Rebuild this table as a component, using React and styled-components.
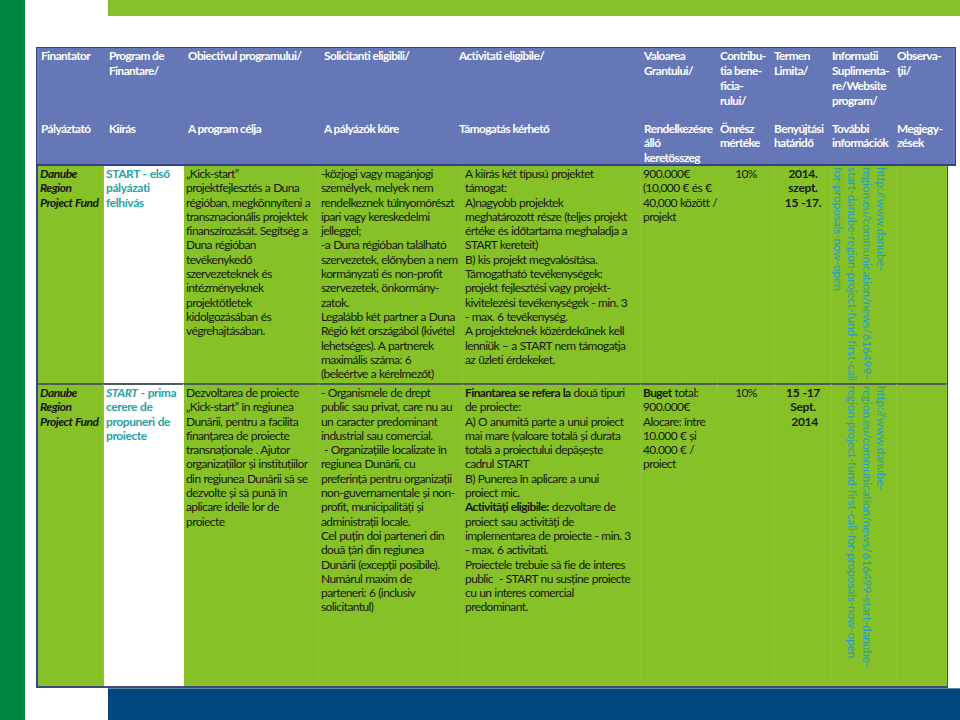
import React from 'react';
import styled, { createGlobalStyle } from 'styled-components';

const Global = createGlobalStyle`
  html, body { margin: 0; padding: 0; background: #fff; }
  body { font-family: Lato, "Open Sans", "Liberation Sans", sans-serif; }
`;

const Page = styled.div`
  display: flex;
  width: 960px;
  height: 720px;
  overflow: hidden;
  background: #fff;
`;

const SideBar = styled.div`
  flex: none;
  width: 25px;
  background: #00873f;
`;

const Main = styled.div`
  flex: 1;
  min-width: 0;
  display: flex;
  flex-direction: column;
`;

const TopBand = styled.div`
  flex: none;
  height: 16px;
  margin-left: 83px;
  background: #86c12a;
`;

const Content = styled.div`
  flex: none;
  display: flex;
  flex-direction: column;
  padding: 31px 0 0 11px;
`;

const FooterBand = styled.div`
  flex: 1;
  margin-left: 83px;
  background: #00467f;
  border-top: 1px solid #5f86b0;
`;

const HeadGrid = styled.div`
  display: grid;
  grid-template-columns: 68px 79px 136px 135px 185px 76px 54px 58px 65px 62px;
  grid-template-rows: 74px 42px;
  width: 920px;
  box-sizing: border-box;
  background: #6677b7;
  border: 1px solid #33408a;
  border-bottom-width: 2px;
`;

const HeadCell = styled.div`
  padding: 0 2px 0 4px;
  color: #fff;
  font-weight: 700;
  font-size: 11.8px;
  line-height: ${(p) => (p.$tight ? '14.4px' : '15px')};
  white-space: nowrap;
  letter-spacing: -0.55px;
`;

const BodyGrid = styled.div`
  position: relative;
  z-index: 1;
  display: grid;
  grid-template-columns: 66px 80px 135px 144px 178px 77px 57px 57px 65px 50px;
  grid-template-rows: 217px 303px;
  width: 912px;
  box-sizing: border-box;
  border-left: 2px solid #3a4585;
  border-right: 1px solid #3f4d6a;
  border-bottom: 2px solid #3f4a74;
`;

const Cell = styled.div`
  box-sizing: border-box;
  padding: 1px 2px 0 2px;
  background: ${(p) => (p.$white ? '#ffffff' : '#86c128')};
  border-right: 1px solid ${(p) => (p.$white ? 'transparent' : 'rgba(255,255,255,0.07)')};
  border-top: ${(p) => (p.$second ? '2px solid #4f5a5c' : '0')};
  color: #16180e;
  font-size: 12px;
  line-height: 14.3px;
  white-space: nowrap;
  text-align: ${(p) => p.$align || 'left'};
  letter-spacing: -0.6px;
  word-spacing: 0.5px;
`;

const FunderCell = styled(Cell)`
  font-weight: 700;
  font-style: italic;
  color: #141414;
  letter-spacing: -0.5px;
`;

const CallCell = styled(Cell)`
  font-weight: 700;
  color: #2aa0a7;
  letter-spacing: -0.4px;
`;

const DateCell = styled(Cell)`
  font-weight: 700;
  letter-spacing: -0.3px;
`;

const LinkCell = styled(Cell)`
  writing-mode: vertical-rl;
  padding: 1px 8px 0 0;
  color: #239ec0;
  line-height: 14.3px;
  letter-spacing: -0.2px;
  overflow: visible;
`;

const Strong = styled.b`
  font-weight: 700;
`;

const Em = styled.i`
  font-style: italic;
`;

const Lines = ({ items }) =>
  items.map((l, i) => (
    <React.Fragment key={i}>
      {l}
      {i < items.length - 1 && <br />}
    </React.Fragment>
  ));

const head1 = [
  ['Finantator'],
  ['Program de', 'Finantare/'],
  ['Obiectivul programului/'],
  ['Solicitanti eligibili/'],
  ['Activitati eligibile/'],
  ['Valoarea', 'Grantului/'],
  ['Contribu-', 'tia bene-', 'ficia-', 'rului/'],
  ['Termen', 'Limita/'],
  ['Informatii', 'Suplimenta-', 're/Website', 'program/'],
  ['Observa-', 'ţii/'],
];

const head2 = [
  ['Pályáztató'],
  ['Kiírás'],
  ['A program célja'],
  ['A pályázók köre'],
  ['Támogatás kérhető'],
  ['Rendelkezésre', 'álló', 'keretösszeg'],
  ['Önrész', 'mértéke'],
  ['Benyújtási', 'határidő'],
  ['További', 'információk'],
  ['Megjegy-', 'zések'],
];

const funder = ['Danube', 'Region', 'Project Fund'];

const rows = [
  {
    call: ['START - első', 'pályázati', 'felhívás'],
    goal: [
      '„Kick-start”',
      'projektfejlesztés a Duna',
      'régióban, megkönnyíteni a',
      'transznacionális projektek',
      'finanszírozását. Segítség a',
      'Duna régióban',
      'tevékenykedő',
      'szervezeteknek és',
      'intézményeknek',
      'projektötletek',
      'kidolgozásában és',
      'végrehajtásában.',
    ],
    applicants: [
      '-közjogi vagy magánjogi',
      'személyek, melyek nem',
      'rendelkeznek túlnyomórészt',
      'ipari vagy kereskedelmi',
      'jelleggel;',
      '-a Duna régióban található',
      'szervezetek, előnyben a nem',
      'kormányzati és non-profit',
      'szervezetek, önkormány-',
      'zatok.',
      'Legalább két partner a Duna',
      'Régió két országából (kivétel',
      'lehetséges). A partnerek',
      'maximális száma: 6',
      '(beleértve a kérelmezőt)',
    ],
    activities: [
      'A kiírás két típusú projektet',
      'támogat:',
      'A)nagyobb projektek',
      'meghatározott része (teljes projekt',
      'értéke és időtartama meghaladja a',
      'START kereteit)',
      'B) kis projekt megvalósítása.',
      'Támogatható tevékenységek:',
      'projekt fejlesztési vagy projekt-',
      'kivitelezési tevékenységek - min. 3',
      '- max. 6 tevékenység.',
      'A projekteknek közérdekűnek  kell',
      'lenniük – a START nem támogatja',
      'az üzleti érdekeket.',
    ],
    value: ['900.000€', '(10,000 € és €', '40,000 között /', 'projekt'],
    share: '10%',
    deadline: ['2014.', 'szept.', '15 -17.'],
    link: [
      'http://www.danube-',
      'region.eu/communication/news/616499-',
      'start-danube-region-project-fund-first-call-',
      'for-proposals-now-open',
    ],
  },
  {
    call: [
      <>
        <Em>START</Em> - prima
      </>,
      'cerere de',
      'propuneri de',
      'proiecte',
    ],
    goal: [
      'Dezvoltarea de proiecte',
      '„Kick-start” în regiunea',
      'Dunării, pentru a facilita',
      'finanțarea de proiecte',
      'transnaționale . Ajutor',
      'organizațiilor și instituțiilor',
      'din regiunea Dunării să se',
      'dezvolte și să pună în',
      'aplicare ideile lor de',
      'proiecte',
    ],
    applicants: [
      '- Organismele de drept',
      'public sau privat, care nu au',
      'un caracter predominant',
      'industrial sau comercial.',
      '\u00a0- Organizațiile localizate în',
      'regiunea Dunării, cu',
      'preferință pentru organizații',
      'non-guvernamentale și non-',
      'profit, municipalități și',
      'administrații locale.',
      'Cel puțin doi parteneri din',
      'două țări din regiunea',
      'Dunării (excepții posibile).',
      'Numărul maxim de',
      'parteneri: 6 (inclusiv',
      'solicitantul)',
    ],
    activities: [
      <>
        <Strong>Finantarea se refera la</Strong> două tipuri
      </>,
      'de proiecte:',
      'A) O anumită parte a unui proiect',
      'mai mare (valoare totală și durata',
      'totală a proiectului depășește',
      'cadrul START',
      'B) Punerea în aplicare a unui',
      'proiect mic.',
      <>
        <Strong>Activități eligibile:</Strong> dezvoltare de
      </>,
      'proiect sau activități de',
      'implementarea de proiecte - min. 3',
      '- max. 6 activitati.',
      'Proiectele trebuie să fie de interes',
      'public \u00a0- START nu susține proiecte',
      'cu un interes comercial',
      'predominant.',
    ],
    value: [
      <>
        <Strong>Buget</Strong> total:
      </>,
      '900.000€',
      'Alocare: între',
      '10.000 € și',
      '40.000 € /',
      'proiect',
    ],
    share: '10%',
    deadline: ['15 -17', 'Sept.', '\u00a02014'],
    link: [
      'http://www.danube-',
      'region.eu/communication/news/616499-start-danube-',
      'region-project-fund-first-call-for-proposals-now-open',
    ],
  },
];

export default function App() {
  return (
    <>
      <Global />
      <Page>
        <SideBar />
        <Main>
          <TopBand />
          <Content>
            <HeadGrid>
              {head1.map((l, i) => (
                <HeadCell key={'a' + i}>
                  <Lines items={l} />
                </HeadCell>
              ))}
              {head2.map((l, i) => (
                <HeadCell key={'b' + i} $tight>
                  <Lines items={l} />
                </HeadCell>
              ))}
            </HeadGrid>
            <BodyGrid>
              {rows.map((r, i) => {
                const s = i > 0;
                return (
                  <React.Fragment key={i}>
                    <FunderCell $second={s}>
                      <Lines items={funder} />
                    </FunderCell>
                    <CallCell $white $second={s}>
                      <Lines items={r.call} />
                    </CallCell>
                    <Cell $second={s}>
                      <Lines items={r.goal} />
                    </Cell>
                    <Cell $second={s}>
                      <Lines items={r.applicants} />
                    </Cell>
                    <Cell $second={s}>
                      <Lines items={r.activities} />
                    </Cell>
                    <Cell $second={s}>
                      <Lines items={r.value} />
                    </Cell>
                    <Cell $second={s} $align="center">
                      {r.share}
                    </Cell>
                    <DateCell $second={s} $align="center">
                      <Lines items={r.deadline} />
                    </DateCell>
                    <LinkCell $second={s}>
                      <Lines items={r.link} />
                    </LinkCell>
                    <Cell $second={s} />
                  </React.Fragment>
                );
              })}
            </BodyGrid>
          </Content>
          <FooterBand />
        </Main>
      </Page>
    </>
  );
}
